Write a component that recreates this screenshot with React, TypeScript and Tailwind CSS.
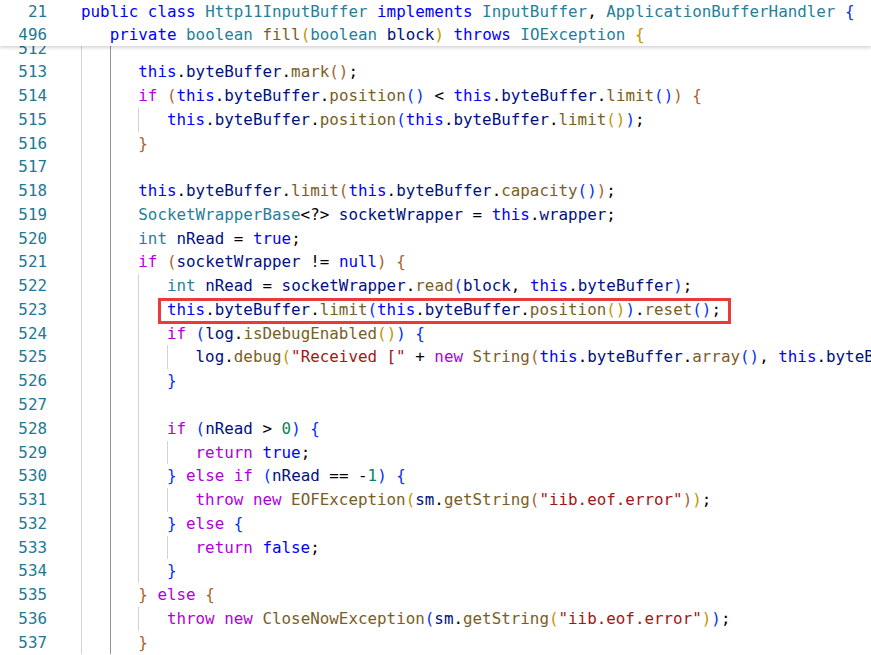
import React from 'react';

type Line = { n: number; level: number; text: string; guides?: number; mark?: boolean };

const BLUE_KW = new Set(['public', 'class', 'private', 'this', 'true', 'false', 'null', 'throws', 'implements']);
const PURPLE_KW = new Set(['if', 'else', 'return', 'throw', 'new']);
const PRIMITIVES = new Set(['int', 'boolean']);
const BRACKETS = ['text-[#0431fa]', 'text-[#c29400]', 'text-[#a8622a]'];

const header: Line[] = [
  { n: 21, level: 0, text: 'public class Http11InputBuffer implements InputBuffer, ApplicationBufferHandler {' },
  { n: 496, level: 1, text: 'private boolean fill(boolean block) throws IOException {' },
];

const body: Line[] = [
  { n: 512, level: 0, guides: 2, text: '' },
  { n: 513, level: 2, text: 'this.byteBuffer.mark();' },
  { n: 514, level: 2, text: 'if (this.byteBuffer.position() < this.byteBuffer.limit()) {' },
  { n: 515, level: 3, text: 'this.byteBuffer.position(this.byteBuffer.limit());' },
  { n: 516, level: 2, text: '}' },
  { n: 517, level: 0, guides: 2, text: '' },
  { n: 518, level: 2, text: 'this.byteBuffer.limit(this.byteBuffer.capacity());' },
  { n: 519, level: 2, text: 'SocketWrapperBase<?> socketWrapper = this.wrapper;' },
  { n: 520, level: 2, text: 'int nRead = true;' },
  { n: 521, level: 2, text: 'if (socketWrapper != null) {' },
  { n: 522, level: 3, text: 'int nRead = socketWrapper.read(block, this.byteBuffer);' },
  { n: 523, level: 3, text: 'this.byteBuffer.limit(this.byteBuffer.position()).reset();', mark: true },
  { n: 524, level: 3, text: 'if (log.isDebugEnabled()) {' },
  {
    n: 525,
    level: 4,
    text: 'log.debug("Received [" + new String(this.byteBuffer.array(), this.byteBuffer.position(), this.byteBuffer.remaining()) + "]");',
  },
  { n: 526, level: 3, text: '}' },
  { n: 527, level: 0, guides: 3, text: '' },
  { n: 528, level: 3, text: 'if (nRead > 0) {' },
  { n: 529, level: 4, text: 'return true;' },
  { n: 530, level: 3, text: '} else if (nRead == -1) {' },
  { n: 531, level: 4, text: 'throw new EOFException(sm.getString("iib.eof.error"));' },
  { n: 532, level: 3, text: '} else {' },
  { n: 533, level: 4, text: 'return false;' },
  { n: 534, level: 3, text: '}' },
  { n: 535, level: 2, text: '} else {' },
  { n: 536, level: 3, text: 'throw new CloseNowException(sm.getString("iib.eof.error"));' },
  { n: 537, level: 2, text: '}' },
];

type Tok = { t: string; c: string };

// tiny java-ish highlighter, keeps bracket depth between lines
function tokenize(text: string, depth: { d: number }): Tok[] {
  const out: Tok[] = [];
  const re = /("[^"]*"|\s+|[A-Za-z_][A-Za-z0-9_]*|\d+|[(){}]|.)/g;
  let m: RegExpExecArray | null;
  while ((m = re.exec(text))) {
    const t = m[0];
    let c = 'text-black';
    if (t.startsWith('"')) c = 'text-[#a31515]';
    else if (/^\d/.test(t)) c = 'text-[#098658]';
    else if (/^[A-Za-z_]/.test(t)) {
      const next = text[re.lastIndex];
      if (BLUE_KW.has(t)) c = 'text-[#0000ff]';
      else if (PURPLE_KW.has(t)) c = 'text-[#af00db]';
      else if (PRIMITIVES.has(t)) c = 'text-[#267f99]';
      else if (next === '(') c = 'text-[#795e26]';
      else if (/^[A-Z]/.test(t)) c = 'text-[#267f99]';
      else c = 'text-[#001080]';
    } else if (t === '(' || t === '{') {
      c = BRACKETS[depth.d % 3];
      depth.d++;
    } else if (t === ')' || t === '}') {
      depth.d--;
      c = BRACKETS[depth.d % 3];
    }
    out.push({ t, c });
  }
  return out;
}

function CodeRow({ line, depth, showGuides }: { line: Line; depth: { d: number }; showGuides: boolean }) {
  const toks = tokenize(line.text, depth);
  const cells = line.text ? line.level : line.guides ?? 0;
  return (
    <div className="flex h-[23.78px] leading-[23.78px] whitespace-pre">
      <span className="w-[47px] shrink-0 text-right text-[#237893]">{line.n}</span>
      <span className="w-[34px] shrink-0" />
      {Array.from({ length: cells }).map((_, k) => (
        <span
          key={k}
          className={
            !showGuides
              ? 'w-[3ch] shrink-0'
              : k === 1
                ? 'w-[3ch] shrink-0 border-l border-[#939393]'
                : 'w-[3ch] shrink-0 border-l border-[#d3d3d3]'
          }
        />
      ))}
      <span className="relative shrink-0">
        {toks.map((tk, i) => (
          <span key={i} className={tk.c}>
            {tk.t}
          </span>
        ))}
        {line.mark && (
          <span className="absolute -left-[9px] -right-[10px] top-0 -bottom-[2px] border-[3px] border-[#ea3a3a]" />
        )}
      </span>
    </div>
  );
}

export default function App() {
  const headDepth = { d: 0 };
  const bodyDepth = { d: 2 };
  return (
    <div className="relative h-screen w-full overflow-hidden bg-white font-['DejaVu_Sans_Mono',monospace] text-[15.86px]">
      {/* sticky scroll header */}
      <div className="absolute inset-x-0 top-0 z-10 h-[46px] bg-white shadow-[0_2px_3px_rgba(0,0,0,0.16)]">
        {header.map((l) => (
          <div key={l.n} className="h-[23px] overflow-hidden">
            <CodeRow line={l} depth={headDepth} showGuides={false} />
          </div>
        ))}
      </div>

      <div className="pt-[36.5px]">
        {body.map((l) => (
          <CodeRow key={l.n} line={l} depth={bodyDepth} showGuides />
        ))}
      </div>
    </div>
  );
}
